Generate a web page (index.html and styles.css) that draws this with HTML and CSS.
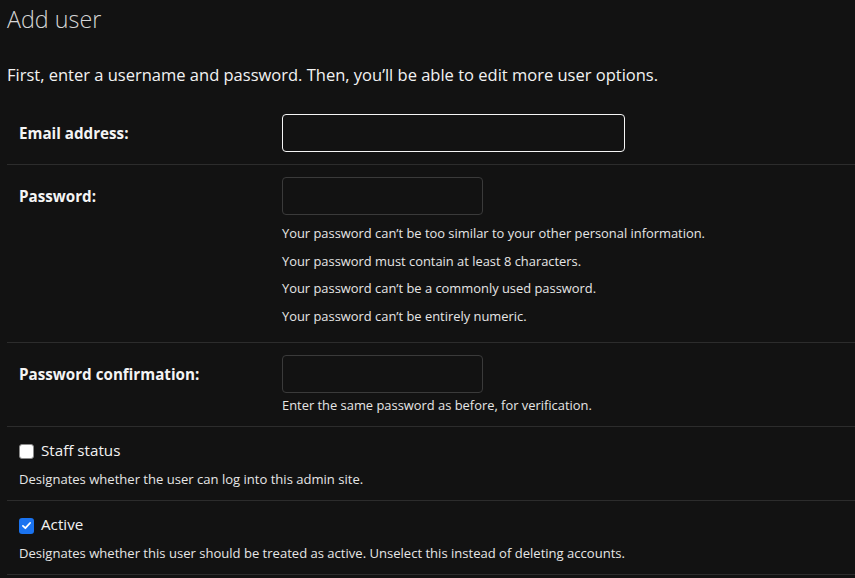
FILE: index.html
```html
<!DOCTYPE html>
<html lang="en">
<head>
<meta charset="utf-8">
<title>Add user</title>
<link rel="stylesheet" href="styles.css">
</head>
<body>
<main class="content">
  <h1 class="title">Add user</h1>
  <p class="intro">First, enter a username and password. Then, you’ll be able to edit more user options.</p>
  <form class="module">
    <div class="row">
      <label class="label">Email address:</label>
      <div class="field"><input class="input input-wide is-focused" type="email"></div>
    </div>
    <div class="row">
      <label class="label">Password:</label>
      <div class="field">
        <input class="input" type="password">
        <ul class="help-list">
          <li>Your password can’t be too similar to your other personal information.</li>
          <li>Your password must contain at least 8 characters.</li>
          <li>Your password can’t be a commonly used password.</li>
          <li>Your password can’t be entirely numeric.</li>
        </ul>
      </div>
    </div>
    <div class="row">
      <label class="label">Password confirmation:</label>
      <div class="field">
        <input class="input" type="password">
        <div class="help">Enter the same password as before, for verification.</div>
      </div>
    </div>
    <div class="row row-check">
      <div class="check-line">
        <span class="checkbox"></span>
        <span class="check-label">Staff status</span>
      </div>
      <div class="help help-check">Designates whether the user can log into this admin site.</div>
    </div>
    <div class="row row-check">
      <div class="check-line">
        <span class="checkbox is-checked"><svg viewBox="0 0 16 16" width="16" height="16"><path d="M3.6 8.4 L6.6 11.3 L12.4 4.9" fill="none" stroke="#fff" stroke-width="2.2" stroke-linecap="round" stroke-linejoin="round"/></svg></span>
        <span class="check-label">Active</span>
      </div>
      <div class="help help-check">Designates whether this user should be treated as active. Unselect this instead of deleting accounts.</div>
    </div>
  </form>
</main>
</body>
</html>
```

FILE: styles.css
```css
html, body {
  margin: 0;
  padding: 0;
  background: #121212;
}
body {
  font-family: "Open Sans", "Liberation Sans", sans-serif;
  color: #eeeeee;
}
.content {
  padding: 0 0 0 7px;
}
.title {
  margin: 4px 0 0;
  font-size: 23.3px;
  line-height: 30px;
  font-weight: 300;
  color: #d6d6d6;
}
.intro {
  margin: 30px 0 16px;
  font-size: 16.5px;
  line-height: 22px;
  color: #f2f2f2;
}
.module {
  display: flex;
  flex-direction: column;
}
.row {
  display: flex;
  padding: 12px;
  border-bottom: 1px solid #2c2c2c;
}
.label {
  width: 263px;
  flex: none;
  font-size: 15.2px;
  font-weight: 700;
  line-height: 38px;
  color: #f4f4f4;
}
.field {
  display: flex;
  flex-direction: column;
  align-items: flex-start;
}
.input {
  box-sizing: border-box;
  width: 201px;
  height: 38px;
  margin: 0;
  background: #121212;
  border: 1px solid #3a3a3a;
  border-radius: 4px;
  color: #eee;
}
.input-wide {
  width: 343px;
}
.is-focused {
  border-color: #f5f5f5;
}
.help-list {
  list-style: none;
  margin: 5px 0 0;
  padding: 0;
  font-size: 12.9px;
  line-height: 27.5px;
  color: #e6e6e6;
}
.help {
  margin-top: 4px;
  font-size: 12.9px;
  line-height: 17px;
  color: #e6e6e6;
}
.help-check {
  margin-top: 10px;
  font-size: 13.05px;
}
.row-check {
  flex-direction: column;
}
.check-line {
  display: flex;
  align-items: center;
  gap: 7px;
  height: 22px;
}
.checkbox {
  box-sizing: border-box;
  width: 15px;
  height: 15px;
  margin-top: 3px;
  border-radius: 3px;
  background: #ffffff;
  border: 1px solid #8a8a8a;
  display: flex;
  align-items: center;
  justify-content: center;
}
.checkbox.is-checked {
  width: 15px;
  height: 16px;
  background: #1a73f0;
  border: none;
}
.checkbox svg {
  width: 13px;
  height: 13px;
}
.check-label {
  font-size: 15.2px;
  line-height: 22px;
  color: #f2f2f2;
}
```
